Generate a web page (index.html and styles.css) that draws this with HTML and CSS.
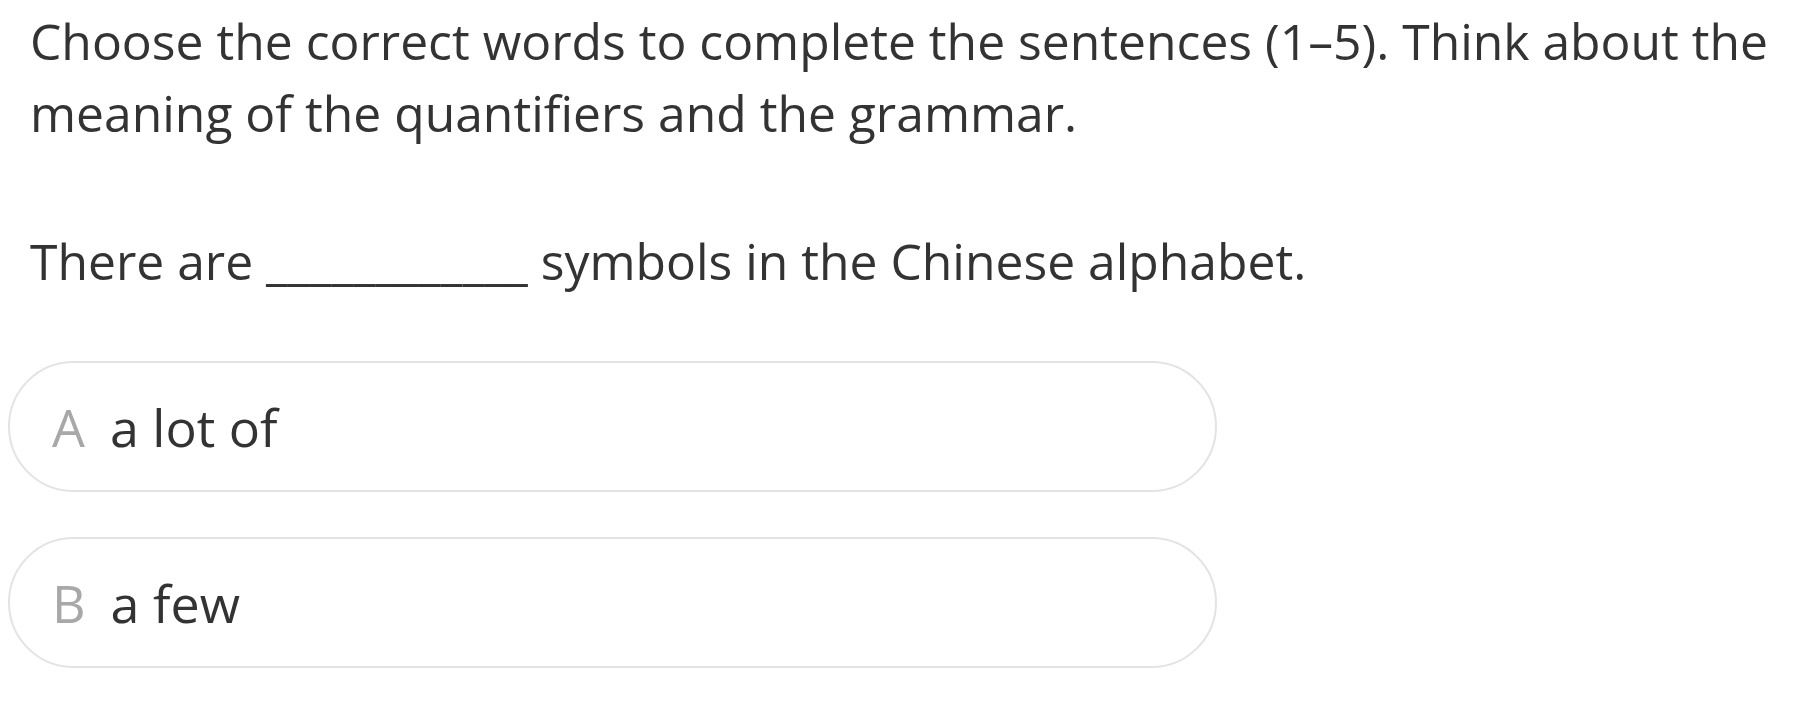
FILE: index.html
```html
<!DOCTYPE html>
<html lang="en">
<head>
<meta charset="utf-8">
<title>Quantifiers</title>
<link rel="stylesheet" href="styles.css">
</head>
<body>
<main class="quiz">
  <p class="instructions">Choose the correct words to complete the sentences (1–5). Think about the meaning of the quantifiers and the grammar.</p>
  <p class="question">There are <span class="blank">____________</span> symbols in the Chinese alphabet.</p>
  <div class="options">
    <button class="option" type="button"><span class="letter">A</span><span class="answer">a lot of</span></button>
    <button class="option" type="button"><span class="letter">B</span><span class="answer">a few</span></button>
  </div>
</main>
</body>
</html>
```
FILE: styles.css
```css
html, body {
  margin: 0;
  padding: 0;
  background: #ffffff;
}
body {
  font-family: "Open Sans", "Noto Sans", sans-serif;
  color: #333333;
}
.quiz {
  padding: 0 8px;
}
.instructions {
  margin: 0;
  padding: 5px 22px 0;
  font-size: 49.8px;
  line-height: 72px;
  max-width: 1760px;
}
.question {
  margin: 0;
  padding: 76px 22px 0;
  font-size: 49.8px;
  line-height: 72px;
}
.options {
  display: flex;
  flex-direction: column;
  gap: 45px;
  margin-top: 64px;
  width: 1209px;
}
.option {
  display: flex;
  align-items: center;
  gap: 25px;
  height: 131px;
  padding: 0 42px;
  border: 2px solid #e3e3e3;
  border-radius: 66px;
  background: #ffffff;
  font-family: inherit;
  font-size: 52px;
  color: #333333;
  text-align: left;
  cursor: pointer;
}
.letter {
  color: #a8a8a8;
}
```
